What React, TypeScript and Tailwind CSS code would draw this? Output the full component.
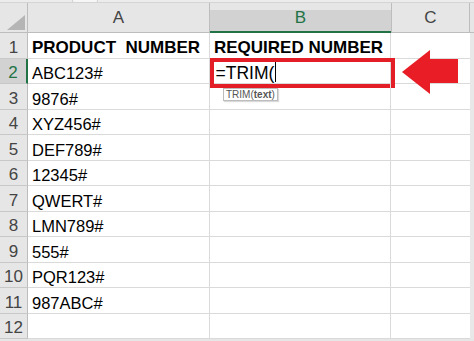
import React from 'react'

const rows: [string, string][] = [
  ['PRODUCT  NUMBER', 'REQUIRED NUMBER'],
  ['ABC123#', ''],
  ['9876#', ''],
  ['XYZ456#', ''],
  ['DEF789#', ''],
  ['12345#', ''],
  ['QWERT#', ''],
  ['LMN789#', ''],
  ['555#', ''],
  ['PQR123#', ''],
  ['987ABC#', ''],
  ['', ''],
]

const font = { fontFamily: '"Liberation Sans", Arial, sans-serif' }

export default function App() {
  return (
    <div className="relative h-[341px] w-[474px] overflow-hidden bg-white" style={font}>
      {/* strip above headers */}
      <div className="flex h-[3px] border-b border-[#d4d4d4] bg-[#ececec]">
        <div className="w-[73px] border-r border-[#d4d4d4]" />
        <div className="w-[24px] rounded-b bg-[#f6f6f6]" />
        <div className="w-[80px] border-l border-[#d4d4d4]" />
      </div>

      <div className="grid grid-cols-[28px_182px_181px_79px_4px]">
        {/* header row */}
        <div className="relative h-[30px] border-r border-b border-[#bdbdbd] bg-[#e6e6e6]">
          <div
            className="absolute right-[2px] bottom-[2px] h-[15px] w-[18px] bg-[#b5b5b5]"
            style={{ clipPath: 'polygon(100% 0, 100% 100%, 0 100%)' }}
          />
        </div>
        <div className="flex h-[30px] items-end justify-center border-r border-b border-[#bdbdbd] bg-[#e6e6e6] pb-[2px] text-[17px] text-[#444]">
          A
        </div>
        <div className="flex h-[30px] flex-col justify-end bg-[#e6e6e6]">
          <div className="flex h-[23px] items-end justify-center border-b-2 border-[#217346] bg-[#d2d2d2] pb-[1px] text-[17px] text-[#217346]">
            B
          </div>
        </div>
        <div className="flex h-[30px] items-end justify-center border-l border-r border-b border-[#bdbdbd] bg-[#e6e6e6] pb-[2px] text-[17px] text-[#444]">
          C
        </div>
        <div className="h-[30px] border-b border-[#bdbdbd] bg-[#e6e6e6]" />

        {rows.map(([a, b], i) => {
          const n = i + 1
          const sel = n === 2
          return (
            <React.Fragment key={n}>
              <div
                className={`flex h-[25.5px] items-end justify-center border-b border-[#c8c8c8] text-[17px] leading-[20px] ${
                  sel
                    ? 'border-r-2 border-r-[#217346] bg-[#d2d2d2] text-[#217346]'
                    : 'border-r border-r-[#bdbdbd] bg-[#e6e6e6] text-[#444]'
                }`}
              >
                {n}
              </div>
              <div
                className={`flex h-[25.5px] items-end whitespace-pre border-r border-b border-[#dadada] pl-[4px] leading-[20px] text-black ${
                  n === 1 ? 'text-[17px] font-bold' : 'text-[16.5px]'
                }`}
              >
                {a}
              </div>
              <div
                className={`relative flex h-[25.5px] items-end border-r border-b border-[#dadada] pl-[4px] leading-[20px] text-black ${
                  n === 1 ? 'text-[17px] font-bold' : 'text-[16.5px]'
                }`}
              >
                {sel ? (
                  <>
                    <span className="ml-[1.5px] text-[17.5px]">=TRIM(</span>
                    <span className="mb-[1px] ml-px h-[21px] w-px bg-black" />
                    <div className="absolute -top-px left-0 h-[30px] w-[185px] border-4 border-[#e31e26]" />
                    <div className="absolute top-[29px] left-[13px] z-10 border border-[#bcbcbc] bg-white px-[2px] text-[10px] leading-[11px] text-[#555] shadow-[1px_1px_1px_rgba(0,0,0,0.15)]">
                      TRIM(<span className="font-bold">text</span>)
                    </div>
                  </>
                ) : (
                  b
                )}
              </div>
              <div className="h-[25.5px] border-b border-[#dadada]" />
              <div className="h-[25.5px] bg-[#e8e8e8]" />
            </React.Fragment>
          )
        })}
      </div>
      <div className="h-[2px] bg-[#e6e6e6]" />

      {/* red arrow */}
      <svg className="absolute top-[49px] left-[400px]" width="60" height="46" viewBox="0 0 60 46">
        <polygon points="2,23 30,1 30,10 58,10 58,34 30,34 30,45" fill="#e81d25" />
      </svg>
    </div>
  )
}
